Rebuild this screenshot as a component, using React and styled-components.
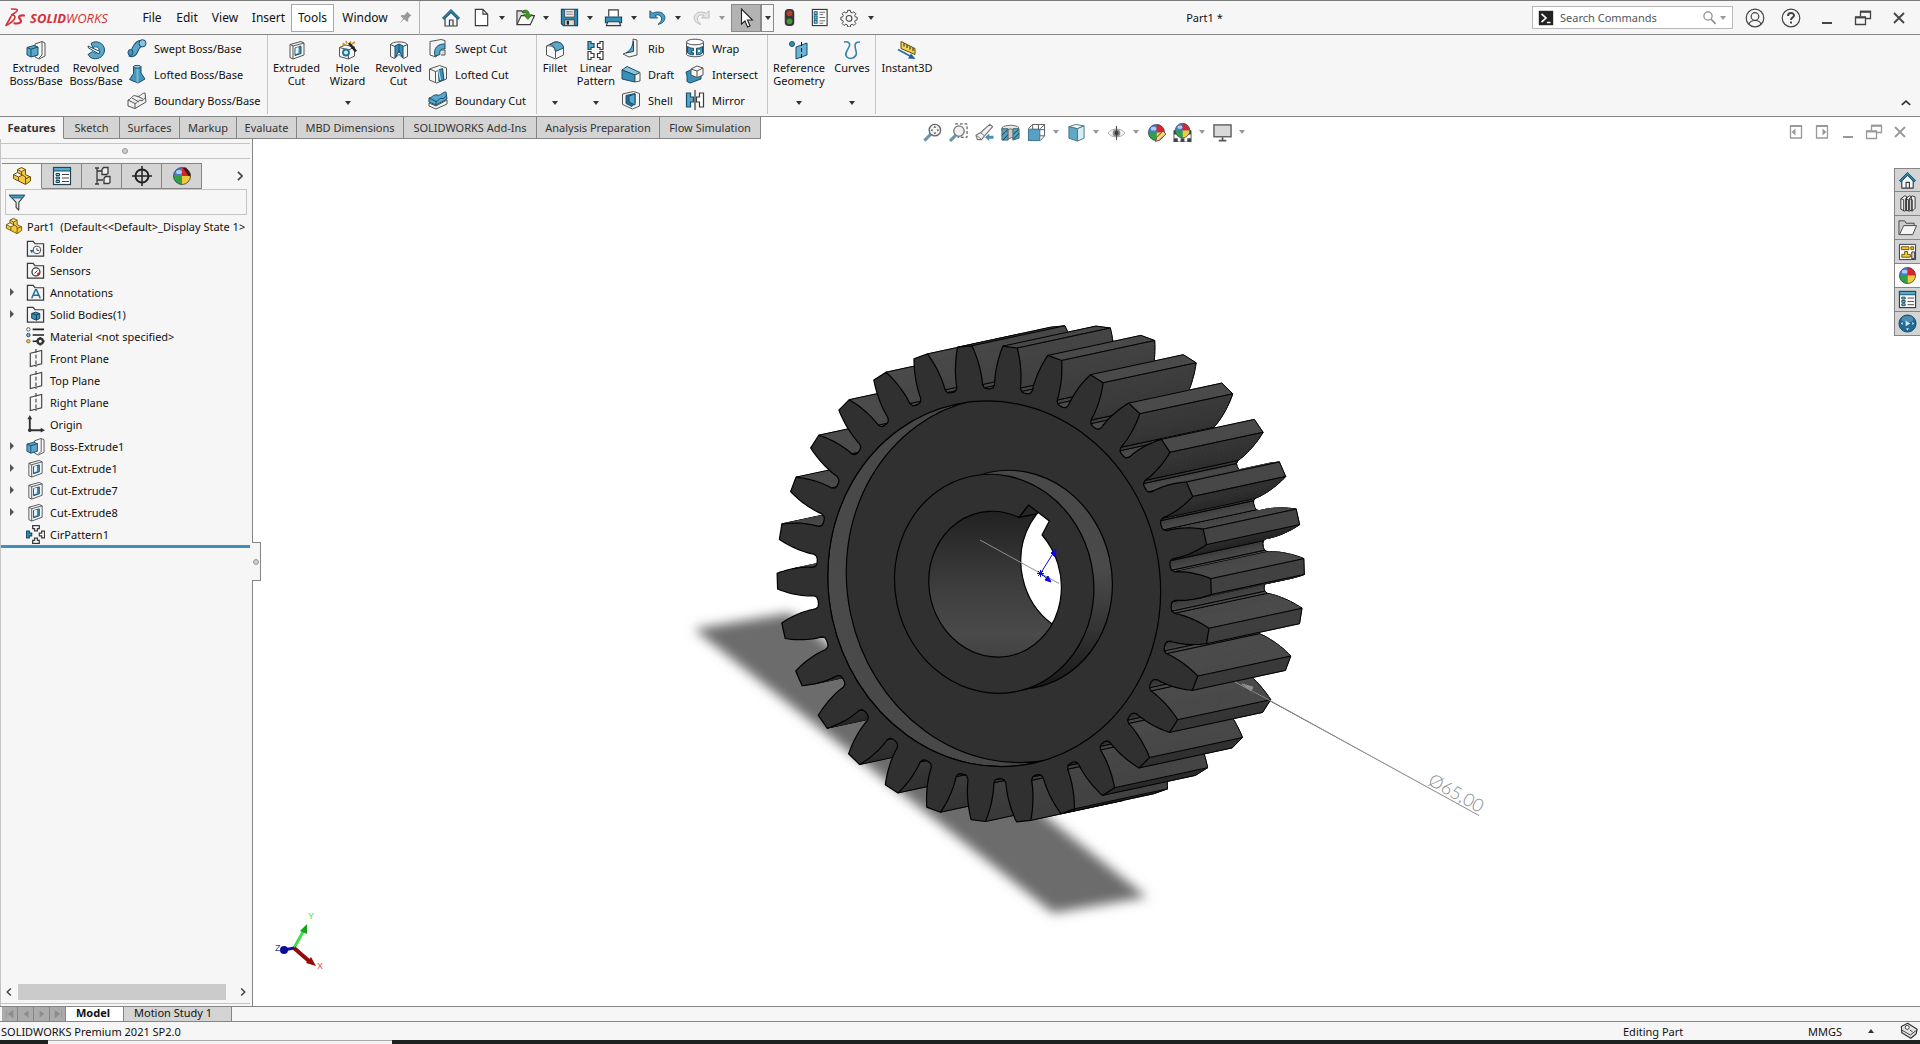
import React from 'react';
import styled, { createGlobalStyle } from 'styled-components';

const GlobalStyle = createGlobalStyle`
  * {
    box-sizing: border-box;
  }
  body {
    margin: 0;
    background: #f6f6f6;
    color: #111;
    font-family: "Noto Sans", "Open Sans", sans-serif;
    font-size: 11px;
    line-height: 13px;
  }
  button, input {
    font: inherit;
    color: inherit;
  }
`;

/* ---------- icons ---------- */

const ink = '#3a3a3a';
const blue = '#5ba6c9';
const deep = '#1f6f98';

const Ball = () => (
  <g>
    <circle cx="10" cy="10" r="8.500" fill="#3f7fd6" />
    <path d="M10 10V1.500a8.500 8.500 0 0 1 8.500 8.500z" fill="#d8262c" />
    <path d="M10 10h8.500a8.500 8.500 0 0 1-8.500 8.500z" fill="#f2cb3d" />
    <path d="M10 10v8.500a8.500 8.500 0 0 1-8.500-8.500z" fill="#2fa043" />
    <ellipse cx="7" cy="6" rx="3" ry="2" fill="#fff" opacity=".6" />
    <circle cx="10" cy="10" r="8.500" fill="none" stroke="#444" strokeWidth=".8" />
  </g>
);

const FolderShape = () => (
  <path d="M1.500 18v-15.500h6l2 2.500h9v13z" fill="#f4f4f4" stroke={ink} strokeWidth="1.300" />
);

const ICONS = {
  home: (
    <g strokeLinejoin="round">
      <path d="M4 10v8h12v-8l-6-6z" fill="#f4f8fa" stroke={ink} strokeWidth="1.200" />
      <path d="M8.500 18v-6h3.500v6" fill="none" stroke={ink} strokeWidth="1.200" />
      <path d="M1.500 10L10 1.500l8.500 8.500-1.500 1.300-7-6.800-7 6.800z" fill="#2b86b0" stroke="#174e69" strokeWidth="1" />
    </g>
  ),
  file: <path d="M3.500 1.500h8l5 5v12h-13z M11.500 1.500v5h5" fill="#fff" stroke={ink} strokeWidth="1.200" />,
  open: (
    <g>
      <path d="M1 17V3h5l1.500 2H13v3" fill="#ddd" stroke={ink} strokeWidth="1.200" />
      <path d="M1 17.500L5.500 8H19.500L15 17.500z" fill="#fafafa" stroke={ink} strokeWidth="1.200" />
      <path d="M7 3c4-2 7 0 7 4h3l-4.500 5L8 7h3c0-2-1.500-3-4-2.500z" fill="#3f9a22" stroke="#22640f" strokeWidth=".7" />
    </g>
  ),
  save: (
    <g>
      <path d="M1.500 1.500h17v17h-15l-2-2z" fill="#2f86ad" stroke="#174a63" strokeWidth="1.200" />
      <rect x="5" y="1.500" width="10" height="8" fill="#f0f0f0" stroke="#444" strokeWidth=".8" />
      <path d="M6.500 4h7M6.500 6.500h7" stroke="#777" />
      <rect x="5" y="12.500" width="10" height="6" fill="#ddd" stroke="#333" strokeWidth=".8" />
      <rect x="7" y="13.500" width="2.500" height="4" fill="#222" />
    </g>
  ),
  print: (
    <g>
      <path d="M5 9V2h10v7" fill="#fff" stroke={ink} strokeWidth="1.200" />
      <path d="M1.500 9.500h17v6h-17z" fill="#3391bb" stroke="#174a63" strokeWidth="1.200" />
      <path d="M4 14.500h12l1.500 4h-15z" fill="#eee" stroke={ink} strokeWidth="1.200" />
    </g>
  ),
  undo: <path d="M2 3v7.500h8L7.300 8c4-2 7 .5 7 3.500 0 2-1.300 4-3.800 5.800 5-1 7.500-4 7.300-7.300C17.500 5 11 2.500 5 5.500z" fill="#4b9cc4" stroke="#1a5877" strokeWidth="1" />,
  redo: <path d="M18 3v7.500h-8l2.700-2.500c-4-2-7 .5-7 3.500 0 2 1.300 4 3.800 5.800-5-1-7.500-4-7.300-7.300C2.500 5 9 2.500 15 5.500z" fill="#e4e4e4" stroke="#bcbcbc" strokeWidth="1" />,
  pointer: <path d="M5.500 1v15l3.500-3 2.500 6 2.500-1-2.500-6h5z" fill="#fff" stroke="#222" strokeWidth="1.100" />,
  traffic: (
    <g>
      <rect x="5" y="1" width="10" height="18" rx="4" fill="#3b3434" />
      <circle cx="10" cy="5.500" r="3" fill="#c33a2c" />
      <circle cx="10" cy="14" r="3" fill="#3ea02f" />
    </g>
  ),
  options: (
    <g>
      <rect x="2.500" y="1.500" width="15.500" height="17" fill="#fff" stroke={ink} strokeWidth="1.200" />
      <path d="M4.500 4h3v3h-3zM4.500 8.500h3v3h-3zM4.500 13h3v3h-3z" fill="#8fc4dd" stroke={deep} strokeWidth="1.200" />
      <path d="M10 4.500h6M10 7h4M10 10h6M10 13.500h6M10 16h4" stroke="#666" />
    </g>
  ),
  gear: (
    <g fill="none" stroke="#444">
      <path d="M8.500 1.500h3l.4 2.200 1.700.7 1.900-1.300 2.100 2.100-1.300 1.900.7 1.700 2 .4v3l-2 .4-.7 1.700 1.300 1.900-2.100 2.100-1.900-1.300-1.700.7-.4 2.200h-3l-.4-2.200-1.700-.7-1.900 1.300-2.100-2.100 1.300-1.900-.7-1.700-2-.4v-3l2-.4.7-1.700-1.300-1.900 2.100-2.100 1.900 1.300 1.700-.7z" strokeWidth="1.100" />
      <circle cx="10" cy="10.500" r="3.200" strokeWidth="1.200" />
    </g>
  ),
  pin: <path d="M12 2l6 5.500-1.500.6-3 3.400.2 3.500-1.500.8-4-3.500L2 18l5-6.800-3.500-3 1-1.500 3.700.4 3.300-3.300z" fill="#9a9a9a" />,
  user: (
    <g fill="none" stroke="#444" strokeWidth="1.200">
      <circle cx="10" cy="10" r="8.800" />
      <circle cx="10" cy="8.500" r="3.800" />
      <path d="M4 16c1-3 3-3.500 6-3.500s5 .5 6 3.500" />
    </g>
  ),
  help: (
    <g fill="none" stroke="#444">
      <circle cx="10" cy="10" r="8.800" strokeWidth="1.200" />
      <path d="M7 8c0-4 6-4 6-.5 0 2-3 2.200-3 4.500" strokeWidth="2" />
      <path d="M10 13.500v2" strokeWidth="2" />
    </g>
  ),
  minimize: <path d="M5 15h10" stroke="currentColor" strokeWidth="2" />,
  restore: (
    <g fill="none" stroke="currentColor" strokeWidth="1.300">
      <path d="M7.500 8.500v-5h10v7h-5" />
      <path d="M7 3.800h11M2 9.200h11" strokeWidth="2" />
      <path d="M2.500 9.500h10v7h-10z" />
    </g>
  ),
  close: <path d="M5 5l10 10M15 5L5 15" stroke="currentColor" strokeWidth="1.800" />,
  paneLeft: (
    <g>
      <path d="M4.500 4h11v12h-11z" fill="none" stroke="#999" strokeWidth="1.300" />
      <path d="M4 4h12" stroke="#999" strokeWidth="2" />
      <path d="M9.500 6.500v7L5.500 10z" fill="#999" />
    </g>
  ),
  paneRight: (
    <g>
      <path d="M4.500 4h11v12h-11z" fill="none" stroke="#999" strokeWidth="1.300" />
      <path d="M4 4h12" stroke="#999" strokeWidth="2" />
      <path d="M10.500 6.500v7l4-3.500z" fill="#999" />
    </g>
  ),
  extrude: (
    <g strokeLinejoin="round" strokeWidth="1">
      <path d="M9 4l7-2.500 3 1.500v13l-6 3-4-2z" fill="#fafafa" stroke="#555" />
      <path d="M16 2v13l-3 3" fill="none" stroke="#555" />
      <path d="M1 7.500l7-2 4 1.500v8l-7 2-4-2z" fill={blue} stroke="#174f6c" />
      <path d="M1 7.500l4 1.700v7.800M5 9.200L12 7" fill="none" stroke="#174f6c" />
    </g>
  ),
  revolve: (
    <g strokeLinejoin="round" strokeWidth="1">
      <path d="M5 3.500C10-.5 18.500 3 18.500 10s-8 11-14 7.500L2 14.500l4.500-3c3 3 6.500 1 6.500-2S8 6 7 8z" fill={blue} stroke="#174f6c" />
      <path d="M2 6l12 5.500-1 2.500L2.500 8z" fill="#f2f7fa" stroke="#174f6c" />
    </g>
  ),
  sweep: (
    <g strokeLinejoin="round">
      <path d="M3 15c6 3 4-10 12-9.500" fill="none" stroke="#174f6c" strokeWidth="7.500" />
      <path d="M3 15c6 3 4-10 12-9.500" fill="none" stroke={blue} strokeWidth="5.500" />
      <ellipse cx="15.500" cy="5.300" rx="3.500" ry="3.600" fill="#8cc4de" stroke="#174f6c" />
      <ellipse cx="3.500" cy="14.500" rx="2.500" ry="3" fill="#4794b8" stroke="#174f6c" />
    </g>
  ),
  loft: (
    <g strokeLinejoin="round">
      <path d="M6.500 2.500h7.500V9l4 6-7 4-8.500-3.500 4-6z" fill="#4795ba" stroke="#174f6c" />
      <path d="M10.500 4v14.500" stroke="#78b8d4" strokeWidth="2" />
      <ellipse cx="10.200" cy="2.800" rx="3.800" ry="1.400" fill="#9fd0e4" stroke="#174f6c" />
    </g>
  ),
  boundary: (
    <g fill="#f1f1f1" stroke="#555" strokeLinejoin="round">
      <path d="M1 10c3 0 4-6 8-4s5-3 9-3l1 9-11 6.500L1 16z" />
      <path d="M1 10l7 3.500c3-.5 3-4 6-3s3-3 5-3.500M8 13.500v5M5 8l7 4M10 6l6 3" fill="none" />
    </g>
  ),
  boundaryCut: (
    <g stroke="#174f6c" strokeLinejoin="round">
      <path d="M1 13l7 3 11-6v4L8 19l-7-3z" fill="#f4f4f4" stroke="#555" />
      <path d="M1 8c3 0 4-4 8-3s5-3 9-3l1 7-11 6-7-3z" fill={blue} />
      <path d="M1 8l7 3.500c3-.5 3-4 6-3s3-3 5-3.500M8 11.500v4" fill="none" />
    </g>
  ),
  cut: (
    <g strokeLinejoin="round">
      <path d="M3 4.500l11-3 3 1.500v12l-11 4-3-1.500z" fill="#f7f7f7" stroke="#555" />
      <path d="M3 4.500l3 1.500v13M6 6l11-3" fill="none" stroke="#555" />
      <path d="M8 8l6-1.800v7.300l-6 2z" fill="#3a8fb6" stroke="#174f6c" />
      <path d="M8.500 8v6l3-1V7z" fill="#f2f7fa" />
    </g>
  ),
  hole: (
    <g strokeLinejoin="round">
      <path d="M1.500 7.500l6-2.500 9 2v9l-6 3-9-2.500z" fill="#f5f5f5" stroke="#555" />
      <path d="M1.500 7.500l9 2.500v9M10.500 10l6-3" fill="none" stroke="#555" />
      <circle cx="8" cy="12.500" r="3" fill="#cfe6f0" stroke={deep} strokeWidth="1.800" />
      <path d="M11 3l7 8.500" stroke="#222" strokeWidth="2.600" />
      <path d="M5 3l2 2M8 1l1 2.500M13 1.500L12 3M4 5.500l3-.5M14 4l3-2" stroke="#dd8a12" strokeWidth="1.600" />
    </g>
  ),
  revolveCut: (
    <g strokeLinejoin="round">
      <path d="M1.500 4.500c2-3.500 15-3.500 17 0v12l-4 2-4.500-4-4.500 4-4-2z" fill="#f5f5f5" stroke="#555" />
      <path d="M6 6l4-2 4 2v12l-4-7-4 7z" fill="#3a8fb6" stroke="#174f6c" />
      <path d="M10 4v9M1.500 4.500L6 6.500M18.500 4.500L14 6.500" stroke="#174f6c" />
    </g>
  ),
  sweepCut: (
    <g strokeLinejoin="round">
      <path d="M2 3.500l11-2 4 1v3L8 19l-6-2z" fill="#f5f5f5" stroke="#555" />
      <path d="M7 18c-2-8 3-12.500 10-12v5c-4-.5-6 1.500-5 5.500z" fill={blue} stroke="#174f6c" />
      <path d="M13 12h4v5h-4" fill="#ddd" stroke="#555" />
    </g>
  ),
  loftCut: (
    <g strokeLinejoin="round">
      <path d="M1.500 5l10-3.500L18.500 4v11l-10 4-7-3z" fill="#f5f5f5" stroke="#555" />
      <path d="M1.500 5l6 2.500v11M7.500 7.500l3-1" fill="none" stroke="#555" />
      <path d="M10.500 6l4-1.500 1.500 11-5 2z" fill="#3a8fb6" stroke="#174f6c" />
      <path d="M10.500 6l2 10" stroke="#cfe6f0" />
    </g>
  ),
  fillet: (
    <g strokeLinejoin="round">
      <path d="M1.500 6l8-4c5-.5 8.500 2 9 6v7l-8 4-9-4z" fill="#f7f7f7" stroke="#555" />
      <path d="M5 4.500l5-2.500c5-.5 8 2 8.500 6l-8 3.500C10 8 8 5 5 4.500z" fill={blue} stroke="#174f6c" />
      <path d="M1.500 6c5-1 9 1.500 9 5.500v7" fill="none" stroke="#555" />
    </g>
  ),
  pattern: (
    <g fill="#fff" stroke={ink} strokeWidth="1.200">
      <path d="M2 1.500h3v2h3v4H5v2H2z" fill={blue} stroke="#174f6c" />
      <path d="M17 1.500h-3v2h-2.500v4H14v2h3zM2 11.500h3v2h3v4H5v2H2zM17 11.500h-3v2h-2.500v4H14v2h3z" />
    </g>
  ),
  rib: (
    <g strokeLinejoin="round">
      <path d="M12 1l4 1v15l-8 2-6-3 10-4z" fill="#f5f5f5" stroke="#555" />
      <path d="M12.500 3v10.500L5 15c5-3 6-6 7.500-12z" fill={blue} stroke="#174f6c" />
    </g>
  ),
  draft: (
    <g strokeLinejoin="round" stroke="#174f6c">
      <path d="M1 6l5-3.500L19 8.500 14 11z" fill="#8cc4de" />
      <path d="M1 6l13 5v7L1 15z" fill="#3a8fb6" />
      <path d="M14 11l5-2.500V17l-5 1z" fill="#f7f7f7" stroke="#555" />
    </g>
  ),
  shell: (
    <g strokeLinejoin="round">
      <path d="M1.500 4l11-2.500 6 2V16l-7 3-10-4.500z" fill="#f5f5f5" stroke="#555" />
      <path d="M5 5.500l9-2v9.500l-3 3.500-6-3z" fill={deep} stroke="#174f6c" />
      <path d="M8 6v6l6 3V4z" fill={blue} stroke="#174f6c" />
    </g>
  ),
  wrap: (
    <g>
      <path d="M1.500 4.500v12c2 3 15 3 17 0v-12" fill="#f5f5f5" stroke="#555" />
      <ellipse cx="10" cy="4" rx="8.500" ry="2.800" fill="#fff" stroke="#555" />
      <path d="M2.500 8.500c2 1.500 4 1.800 6 1.800v2.500H6.500v2H8.500v2c-3 0-5-1-6-2zM17.500 8.500c-2 1.500-4 1.800-6 1.800v6.500c3 0 5-1 6-2z" fill="#3a8fb6" stroke="#174f6c" />
      <circle cx="14" cy="13" r="1.200" fill="#fff" />
    </g>
  ),
  intersect: (
    <g strokeLinejoin="round">
      <path d="M1 8l5-2 5 6 5-1v4l-11 4-3-1.500L2 12z" fill="#3a8fb6" stroke="#174f6c" />
      <path d="M6 5l6-3 6 2v7l-6 2.500L6 11z" fill="#f7f7f7" stroke="#555" />
      <path d="M6 5l6 2v6.500M12 7l6-3" fill="none" stroke="#555" />
    </g>
  ),
  mirror: (
    <g>
      <path d="M1.500 3h4v4h3v5h-3v5h-4z" fill={blue} stroke="#174f6c" strokeWidth="1.200" />
      <path d="M18.500 3h-4v4h-3v5h3v5h4z" fill="#fff" stroke={ink} strokeWidth="1.200" />
      <path d="M10 0v20" stroke="#111" />
    </g>
  ),
  refGeometry: (
    <g>
      <circle cx="3" cy="4" r="2.500" fill="#3a8fb6" stroke="#174f6c" />
      <path d="M7 7l11-4v12L7 19z" fill="#6db4d3" stroke="#174f6c" />
      <path d="M12.500 2v18" stroke="#111" strokeDasharray="4 2" />
    </g>
  ),
  curves: <path d="M2 2c4-1 7 1 5 5s-5 7-2 10 11 1 9-6-1-9 4-9" fill="none" stroke="#3585ab" strokeWidth="1.600" />,
  instant: (
    <g>
      <path d="M4 1.500l14 7v6l-14-6z" fill="#f3d34a" stroke="#5d4c0c" />
      <path d="M7 3.500v3M10 5v3M13 6.500v3M16 8v3" stroke="#222" />
      <path d="M1 9.500l12 6.500" stroke="#2b6ea6" strokeWidth="1.800" />
      <path d="M18.500 19l-7.500-.5 3-5z" fill="#225f96" />
    </g>
  ),
  zoomFit: (
    <g>
      <path d="M1.500 18.500l6.500-6.500" stroke="#6a94aa" strokeWidth="3.200" />
      <circle cx="12.500" cy="7.500" r="6" fill="#f4f4f4" stroke="#666" strokeWidth="1.400" />
      <path d="M12.500 3l1.500 2h-3zM12.500 12l1.500-2h-3zM8 7.500L10 6v3zM17 7.500L15 6v3z" fill="#555" />
    </g>
  ),
  zoomArea: (
    <g>
      <path d="M6.500 1h12.500v14H9" fill="none" stroke="#333" strokeDasharray="3 2" />
      <path d="M1 19l6-6" stroke="#6a94aa" strokeWidth="3.200" />
      <circle cx="10.500" cy="8.500" r="5.500" fill="#f0f0f0" stroke="#777" strokeWidth="1.400" />
    </g>
  ),
  prevView: (
    <g strokeLinejoin="round">
      <path d="M15.500 1.500l3 2.500-8.500 9.500-3 4H2.500L1 13l5-3z" fill="#f2f2f2" stroke="#777" strokeWidth="1.200" />
      <path d="M5.500 10l4.500 3.500M1.500 13l5 4" stroke="#777" />
      <path d="M10.500 15l4.500-4v2.500h4.500v3H15V19z" fill="#4d8fb3" />
    </g>
  ),
  section: (
    <g>
      <path d="M1 5c3-3.500 15-3.500 18 0l-4 3h-3c-2-1.500-3-1.500-4 0H1z" fill="#e8e8e8" stroke="#666" />
      <path d="M1 6h6.500v12H1zM12.500 6H19v10l-6.500 2z" fill="#53a3c5" stroke="#466" />
      <path d="M1 13l6-6M2 18l5.500-6M13 12l5-5M13 17l6-6" stroke="#234" />
      <path d="M7.500 7c2-1 3-1 5 0v8l-5 2z" fill="#ccc" stroke="#666" />
    </g>
  ),
  viewCube: (
    <g fill="none" stroke="#555">
      <path d="M6 1.500h12.500v12L14 18.500M1.500 6L6 1.500v12H18.500M14 6l4.500-4.500M12 1.500v12M6 7h12.500" />
      <path d="M1.500 6.500h12v12h-12z" fill="#58a0c2" stroke="#3b6f88" />
    </g>
  ),
  display: (
    <g strokeLinejoin="round" stroke="#4d7385">
      <path d="M2 4l7-2.500 9 1.500-7 3z" fill="#eef7fb" />
      <path d="M2 4l9 2v13l-9-3z" fill="#5faac9" />
      <path d="M11 6l7-3v13l-7 3z" fill="#d7ecf5" />
    </g>
  ),
  eye: (
    <g>
      <path d="M1 10.500C5 5 15 5 19 10.500 15 16 5 16 1 10.500z" fill="#f4f4f4" stroke="#aaa" />
      <circle cx="10" cy="10.500" r="4" fill="#888" />
      <circle cx="10" cy="10.500" r="2" fill="#333" />
      <path d="M10 3v15" stroke="#444" />
    </g>
  ),
  appearance: (
    <g>
      <Ball />
      <path d="M9 19.500l1-4 7-7 3 3-7 6.500z" fill="#f3d98b" stroke="#8a3b2c" />
    </g>
  ),
  scene: (
    <g>
      <path d="M1 8h18v12H1z" fill="#fff" stroke="#555" />
      <path d="M1 8h4v4H1zM15 8h4v4h-4zM1 16h4v4H1zM8 16h4v4H8zM15 16h4v4h-4z" fill="#444" />
      <g transform="translate(1 -1) scale(.9)"><Ball /></g>
    </g>
  ),
  monitor: (
    <g>
      <rect x="1" y="2" width="18" height="12.500" fill="#d9d9d9" stroke="#555" strokeWidth="1.400" />
      <path d="M10 15v3M6 18.500h8" stroke="#555" strokeWidth="1.800" />
    </g>
  ),
  part: (
    <path
      d="M1.500 8.500l4-2v-3l4-2 4 2v5l5 2.500v4l-5 3.500-12-6z M1.500 8.500l5 2.500 4-2-5-2.500 M6.500 11v4 M10.500 9l3 2v7 M13.500 13l5-2.500 M5.500 3.500l4 2 4-2 M9.500 5.500v4"
      fill="#f5c93f" stroke="#6b5210" strokeWidth="1" strokeLinejoin="round"
    />
  ),
  props: (
    <g>
      <rect x="1.500" y="1.500" width="17" height="17" fill="#fff" stroke="#27414e" strokeWidth="1.200" />
      <path d="M1.500 1.500h17V5h-17z" fill="#58a9c9" stroke="#174a63" />
      <path d="M4 7.500h3.500v2H4zM4 11h3.500v2H4zM4 14.500h3.500v2H4z" fill="#8fc4dd" stroke="#174a63" />
      <path d="M10 8.500h7M10 12h7M10 15.500h7" stroke="#444" />
    </g>
  ),
  config: (
    <g stroke={ink} strokeWidth="1.300">
      <path d="M5 2v16M5 5h5M5 14h6M3 2h4M3 18h4" fill="none" />
      <path d="M10 3.500l1.500-2H16v6l-1.500 1H10zM12 12.500l1.500-2H18v6l-1.500 1H12z" fill="#eee" />
    </g>
  ),
  target: (
    <g fill="none" stroke="#222">
      <circle cx="10" cy="10" r="6.500" strokeWidth="2" />
      <path d="M10 0v20M0 10h20" strokeWidth="1.500" />
    </g>
  ),
  ball: <Ball />,
  ballDark: (
    <g>
      <Ball />
      <path d="M11 2l3-.500 4.500 7-1.500 2z" fill="#3a1512" />
    </g>
  ),
  filter: (
    <g>
      <path d="M1.500 2.500h17L12 10.500V19l-3-3v-5.500z" fill="#e7e7e7" stroke={ink} strokeWidth="1.200" strokeLinejoin="round" />
      <path d="M1.500 2.500h17L16 5.500H4z" fill="#3f9fc6" stroke="#1d5c78" />
    </g>
  ),
  folderHistory: (
    <g>
      <FolderShape />
      <circle cx="11.500" cy="11.500" r="4" fill="#fff" stroke="#444" />
      <path d="M11.500 9.500v2.500h2.500" fill="none" stroke="#444" />
      <path d="M4 11.500h4.500L6 15z" fill={deep} />
    </g>
  ),
  folderSensor: (
    <g>
      <FolderShape />
      <circle cx="10.500" cy="11.500" r="4.200" fill="#fff" stroke="#333" strokeWidth="1.300" />
      <path d="M9 13l3-3" stroke="#222" />
      <path d="M12 14.500l2-2" stroke="#c22" strokeWidth="2" />
    </g>
  ),
  folderNote: (
    <g>
      <FolderShape />
      <path d="M6 16l4-9h1l4 9M7.500 13h6" fill="none" stroke={deep} strokeWidth="1.600" />
    </g>
  ),
  folderBody: (
    <g>
      <FolderShape />
      <path d="M6 9l4-1.500L14.500 9v5L11 16l-5-2z" fill="#3a8fb6" stroke="#0e3f58" />
      <path d="M6 9l5 1.500L14.500 9M11 10.500V16" fill="none" stroke="#0e3f58" />
    </g>
  ),
  material: (
    <g>
      <path d="M7 2.500h12M7 8.500h12M7 15h6" stroke="#222" strokeWidth="1.600" />
      <circle cx="2.500" cy="2.500" r="1.800" fill="#fff" stroke="#555" />
      <circle cx="2.500" cy="8.500" r="1.800" fill="#7fbbd6" stroke="#245" />
      <circle cx="2.500" cy="15" r="1.800" fill="#f2cf3d" stroke="#863" />
      <circle cx="15" cy="15" r="2.800" fill="#fff" stroke="#333" strokeWidth="2.400" />
      <path d="M15 10.500v2M15 17.500v2M10.500 15h2M17.500 15h2" stroke="#333" strokeWidth="2" />
    </g>
  ),
  plane: (
    <g fill="none" stroke="#444" strokeWidth="1.200">
      <path d="M4.500 4.500l12-3v14l-12 3z" />
      <path d="M10.500 0v19" strokeDasharray="4 2" />
    </g>
  ),
  origin: (
    <g stroke="#333" fill="#333">
      <path d="M4 3v13h12" fill="none" strokeWidth="2" />
      <path d="M4 0l2.500 4.500h-5zM20 16l-4.500 2.500v-5z" stroke="none" />
      <circle cx="4" cy="16" r="1.500" />
    </g>
  ),
  circular: (
    <g fill="#fff" stroke={ink} strokeWidth="1.300">
      <path d="M7 .700h7v3h-2v2.500H9V3.700H7zM7 19.300h7v-3h-2v-2.500H9v2.500H7zM19.500 6.500v7h-3v-2h-2.500v-3h2.500v-2z" />
      <path d="M.500 6.500v7h3v-2H6v-3H3.500v-2z" fill="#3a8fb6" stroke="#174f6c" />
    </g>
  ),
  library: (
    <g fill="#eee" stroke="#333" strokeLinejoin="round">
      <path d="M3 5l4-3 2 .5V17l-2 1-4-2zM8 5l4-3 2 .5V17l-2 1-4-1zM12 5l3-3 3 1v12l-3 3-3-1z" />
      <path d="M3 5l3 1v12M8 5l3 1v12M12 5l3 1v12" fill="none" />
    </g>
  ),
  folderOpen: (
    <g stroke="#444" strokeLinejoin="round">
      <path d="M1 17.500V3h6l1.500 2.500H17V8" fill="#ccc" />
      <path d="M1.500 17.500L6 8h13.500l-4 9.500z" fill="#f4f4f4" />
    </g>
  ),
  palette: (
    <g stroke="#333">
      <path d="M1.500 2.500h17v16h-17z" fill="#fff" />
      <path d="M3.500 5h8v3h-8zM13.500 5h3v3h-3zM7 10h3v3h3v3H4v-3h3z" fill="#f2cb2b" stroke="#6b5210" />
      <path d="M14.500 10.500h3v7h-3z" fill="#ddd" />
    </g>
  ),
  forum: (
    <g>
      <circle cx="10" cy="10" r="9" fill="#226a93" stroke="#16435d" />
      <ellipse cx="10" cy="5.500" rx="6" ry="3.500" fill="#5f9dbd" opacity=".7" />
      <path d="M8 7l5 3-5 3zM3 10l2-1.500v3zM17 10l-2-1.500v3zM10 17.500L8.500 15h3z" fill="#cfe8f5" />
    </g>
  ),
  prompt: (
    <g>
      <rect x="2" y="2" width="16" height="16" fill="#222" />
      <path d="M5 5.500l5 4.500-5 4.500M11 15h4" fill="none" stroke="#fff" strokeWidth="1.800" />
    </g>
  ),
  search: (
    <g fill="none" stroke="#888" strokeWidth="1.600">
      <circle cx="8" cy="8" r="5.500" />
      <path d="M12 12l6 6.500" strokeWidth="2" />
    </g>
  ),
  tag: (
    <g strokeLinejoin="round" stroke="#333">
      <path d="M1.500 5l7-3.500L19 8l-1 5-6 5L2 12z" fill="#e4e4e4" strokeWidth="1.300" />
      <path d="M2 9l9.500 5.500L18.500 9" fill="none" />
      <circle cx="8" cy="6" r="2.200" fill="#fff" />
      <path d="M11 9l3 2" />
    </g>
  ),
  chevronRight: <path d="M7 4l6 6-6 6" fill="none" stroke="#444" strokeWidth="2.400" />,
  chevronLeft: <path d="M13 4l-6 6 6 6" fill="none" stroke="#444" strokeWidth="2.400" />,
  chevronUp: <path d="M3 13l7-6 7 6" fill="none" stroke="#333" strokeWidth="2.800" />,
  navFirst: <path d="M4 4v12M15 4v12l-8-6z" fill="#8c8c8c" stroke="#8c8c8c" />,
  navPrev: <path d="M14 4v12l-8-6z" fill="#8c8c8c" />,
  navNext: <path d="M6 4v12l8-6z" fill="#8c8c8c" />,
  navLast: <path d="M16 4v12M5 4v12l8-6z" fill="#8c8c8c" stroke="#8c8c8c" />,
};

const IconSvg = styled.svg`
  display: block;
  flex: none;
  width: ${({ $size }) => $size}px;
  height: ${({ $size }) => $size}px;
`;

const Icon = ({ name, size = 20 }) => (
  <IconSvg $size={size} viewBox="0 0 20 20" fill="none" aria-hidden="true">
    {ICONS[name]}
  </IconSvg>
);

/* ---------- title bar ---------- */

const Window = styled.div`
  display: flex;
  flex-direction: column;
  height: 100vh;
  overflow: hidden;
  border-top: 1px solid #7a7a7a;
`;

const TitleBar = styled.header`
  display: flex;
  align-items: center;
  height: 34px;
  flex: none;
  padding-right: 3px;
  border-bottom: 1px solid #858585;
  white-space: nowrap;
`;

const Brand = styled.div`
  display: flex;
  align-items: center;
  gap: 4px;
  width: 134px;
  padding-left: 4px;
  color: #d4303a;
  font-family: "Open Sans", sans-serif;
  font-size: 13px;
  line-height: 18px;
  font-style: italic;

  svg {
    width: 22px;
    height: 22px;
  }
`;

const MenuButton = styled.button`
  width: ${({ $width }) => $width}px;
  height: 28px;
  padding: 0;
  border: 1px solid ${({ $active }) => ($active ? '#a8a8a8' : 'transparent')};
  background: ${({ $active }) => ($active ? '#fff' : 'none')};
  font-size: 12px;
`;

const ToolButton = styled.button`
  display: flex;
  align-items: center;
  justify-content: center;
  flex: none;
  width: ${({ $width }) => $width}px;
  height: ${({ $height }) => $height || 28}px;
  padding: 0;
  border: ${({ $boxed }) => ($boxed ? '1px solid #8a8a8a' : '0')};
  background: ${({ $pressed }) => ($pressed ? '#b3b3b3' : 'none')};
  color: ${({ $muted }) => ($muted ? '#999' : '#444')};
`;

const Caret = styled.span`
  width: 0;
  height: 0;
  border: 3px solid transparent;
  border-bottom-width: 0;
  border-top: 4px solid ${({ $muted }) => ($muted ? '#999' : '#333')};
`;

const Divider = styled.div`
  width: 1px;
  height: 34px;
  margin: 0 16px 0 4px;
  background: #b5b5b5;
`;

const QuickTools = styled.div`
  display: flex;
  gap: 2px;
  margin-left: 3px;
`;

const Split = styled.div`
  display: flex;
`;

const DocTitle = styled.div`
  flex: 1;
  text-align: center;
`;

const SearchBox = styled.label`
  display: flex;
  align-items: center;
  width: 201px;
  height: 23px;
  margin-right: 4px;
  padding: 0 3px 0 4px;
  border: 1px solid #b8b8b8;
  background: #fff;

  input {
    flex: 1;
    min-width: 0;
    margin-left: 5px;
    padding: 0;
    border: 0;
    outline: 0;
    background: none;
  }
  input::placeholder {
    color: #555;
    opacity: 1;
  }
`;

const MENUS = [
  { label: 'File', width: 36 },
  { label: 'Edit', width: 34 },
  { label: 'View', width: 42 },
  { label: 'Insert', width: 45 },
  { label: 'Tools', width: 43, active: true },
  { label: 'Window', width: 62 },
];

const SPLITS = ['file', 'open', 'save', 'print', 'undo', 'redo'];

const TopBar = () => (
  <TitleBar>
    <Brand>
      <svg viewBox="0 0 22 22" fill="none" stroke="#d4303a" strokeLinecap="round" strokeLinejoin="round">
        <path d="M7.500 2l4.500.300c2 .2 1.500 1.700-.5 3L7.500 8c6.500 0 3.500 6-5.500 10.500L7 9.500" strokeWidth="1.600" />
        <path d="M20 8.500c-3-.5-6 .5-4.500 2.800s2.500 3 .5 4.400c-1.500 1.100-3.500.9-5.500.6" strokeWidth="2.200" />
      </svg>
      <span><b>SOLID</b>WORKS</span>
    </Brand>
    {MENUS.map((menu) => (
      <MenuButton key={menu.label} $width={menu.width} $active={menu.active}>{menu.label}</MenuButton>
    ))}
    <ToolButton $width={19} aria-label="Pin menu"><Icon name="pin" size={15} /></ToolButton>
    <Divider />
    <ToolButton $width={30} aria-label="Home"><Icon name="home" /></ToolButton>
    <QuickTools>
      {SPLITS.map((name) => (
        <Split key={name}>
          <ToolButton $width={24} aria-label={name}><Icon name={name} size={19} /></ToolButton>
          <ToolButton $width={18} aria-label={`${name} options`}><Caret $muted={name === 'redo'} /></ToolButton>
        </Split>
      ))}
    </QuickTools>
    <ToolButton $width={30} $boxed $pressed aria-label="Select"><Icon name="pointer" /></ToolButton>
    <ToolButton $width={13} $boxed aria-label="Select options"><Caret /></ToolButton>
    <ToolButton $width={30} aria-label="Rebuild"><Icon name="traffic" size={19} /></ToolButton>
    <ToolButton $width={30} aria-label="File properties"><Icon name="options" size={19} /></ToolButton>
    <ToolButton $width={30} aria-label="Options"><Icon name="gear" size={18} /></ToolButton>
    <ToolButton $width={13} aria-label="More options"><Caret /></ToolButton>
    <DocTitle>Part1 *</DocTitle>
    <SearchBox>
      <Icon name="prompt" size={18} />
      <input type="text" placeholder="Search Commands" aria-label="Search Commands" />
      <Icon name="search" size={15} />
      <ToolButton $width={12} $height={20} aria-label="Search options"><Caret $muted /></ToolButton>
    </SearchBox>
    {['user', 'help', 'minimize', 'restore', 'close'].map((name) => (
      <ToolButton key={name} $width={36} aria-label={name}><Icon name={name} /></ToolButton>
    ))}
  </TitleBar>
);

/* ---------- ribbon ---------- */

const RibbonBar = styled.div`
  display: flex;
  flex: none;
  height: 82px;
  border-bottom: 1px solid #858585;
`;

const Group = styled.div`
  display: flex;
  width: ${({ $width }) => $width}px;
  height: 79px;
  padding-left: ${({ $pad }) => $pad || 0}px;
  border-right: ${({ $last }) => ($last ? 0 : '1px solid #c4c4c4')};
`;

const BigButton = styled.button`
  display: flex;
  flex-direction: column;
  align-items: center;
  flex: none;
  width: ${({ $width }) => $width}px;
  padding: 5px 0 9px;
  border: 0;
  background: none;
  white-space: pre;

  ${Caret} {
    margin-top: auto;
  }
`;

const BigLabel = styled.span`
  margin-top: 1px;
`;

const SmallColumn = styled.div`
  display: flex;
  flex-direction: column;
  flex: none;
  width: ${({ $width }) => $width || 110}px;
  margin-left: ${({ $gap }) => $gap || 0}px;
`;

const SmallButton = styled.button`
  display: flex;
  align-items: center;
  gap: 7px;
  height: 26px;
  padding: 0;
  border: 0;
  background: none;
  white-space: nowrap;
`;

const Collapse = styled.button`
  align-self: flex-end;
  display: flex;
  margin: 0 8px 7px auto;
  padding: 0;
  border: 0;
  background: none;
`;

const GROUPS = [
  {
    width: 268, pad: 6,
    big: [
      { icon: 'extrude', label: 'Extruded\nBoss/Base', width: 60 },
      { icon: 'revolve', label: 'Revolved\nBoss/Base', width: 60 },
    ],
    columns: [{ gap: 1, width: 130, items: [['sweep', 'Swept Boss/Base'], ['loft', 'Lofted Boss/Base'], ['boundary', 'Boundary Boss/Base']] }],
  },
  {
    width: 269, pad: 3,
    big: [
      { icon: 'cut', label: 'Extruded\nCut', width: 51 },
      { icon: 'hole', label: 'Hole\nWizard', width: 51, menu: true },
      { icon: 'revolveCut', label: 'Revolved\nCut', width: 51 },
    ],
    columns: [{ gap: 4, items: [['sweepCut', 'Swept Cut'], ['loftCut', 'Lofted Cut'], ['boundaryCut', 'Boundary Cut']] }],
  },
  {
    width: 231,
    big: [
      { icon: 'fillet', label: 'Fillet', width: 36, menu: true },
      { icon: 'pattern', label: 'Linear\nPattern', width: 46, menu: true },
    ],
    columns: [
      { gap: 2, width: 64, items: [['rib', 'Rib'], ['draft', 'Draft'], ['shell', 'Shell']] },
      { width: 80, items: [['wrap', 'Wrap'], ['intersect', 'Intersect'], ['mirror', 'Mirror']] },
    ],
  },
  {
    width: 108, pad: 1,
    big: [
      { icon: 'refGeometry', label: 'Reference\nGeometry', width: 60, menu: true },
      { icon: 'curves', label: 'Curves', width: 46, menu: true },
    ],
    columns: [],
  },
  { width: 64, last: true, big: [{ icon: 'instant', label: 'Instant3D', width: 62 }], columns: [] },
];

const Ribbon = () => (
  <RibbonBar>
    {GROUPS.map((group, index) => (
      <Group key={index} $width={group.width} $pad={group.pad} $last={group.last}>
        {group.big.map((item) => (
          <BigButton key={item.label} $width={item.width}>
            <Icon name={item.icon} />
            <BigLabel>{item.label}</BigLabel>
            {item.menu && <Caret />}
          </BigButton>
        ))}
        {group.columns.map((column, i) => (
          <SmallColumn key={i} $gap={column.gap} $width={column.width}>
            {column.items.map(([icon, label]) => (
              <SmallButton key={label}><Icon name={icon} />{label}</SmallButton>
            ))}
          </SmallColumn>
        ))}
      </Group>
    ))}
    <Collapse aria-label="Collapse ribbon"><Icon name="chevronUp" size={12} /></Collapse>
  </RibbonBar>
);

/* ---------- command tabs ---------- */

const CommandTabs = styled.nav`
  position: relative;
  z-index: 1;
  display: flex;
  width: max-content;
  height: 22px;
  margin-bottom: -22px;
`;

const CommandTab = styled.button`
  width: ${({ $width }) => $width}px;
  padding: 0;
  border: 0;
  border-right: 1px solid #858585;
  border-bottom: 1px solid ${({ $active }) => ($active ? '#f6f6f6' : '#858585')};
  background: ${({ $active }) => ($active ? '#f6f6f6' : '#d4d4d4')};
  color: #333;
  font-weight: ${({ $active }) => ($active ? 700 : 400)};
  white-space: nowrap;
`;

const TABS = [
  ['Features', 64], ['Sketch', 56], ['Surfaces', 60], ['Markup', 57], ['Evaluate', 60],
  ['MBD Dimensions', 107], ['SOLIDWORKS Add-Ins', 133], ['Analysis Preparation', 123], ['Flow Simulation', 101],
];

/* ---------- feature manager ---------- */

const Workspace = styled.main`
  display: flex;
  flex: 1;
  min-height: 0;
`;

const Panel = styled.aside`
  position: relative;
  display: flex;
  flex-direction: column;
  flex: none;
  width: 253px;
  padding: 26px 2px 0 0;
  border-right: 1px solid #858585;
  border-left: 1px solid #c4c4c4;
`;

const Grip = styled.div`
  display: flex;
  align-items: center;
  justify-content: center;
  height: 16px;
  padding-right: 2px;
  border-top: 1px solid #c4c4c4;
  border-bottom: 1px solid #c4c4c4;
`;

const Dot = styled.span`
  width: 6px;
  height: 6px;
  border: 1px solid #999;
  border-radius: 50%;
  background: #ccc;
`;

const PanelTabs = styled.div`
  display: flex;
  height: 26px;
  margin-top: 4px;
  padding-left: 1px;
`;

const PanelTab = styled.button`
  display: flex;
  align-items: center;
  justify-content: center;
  width: 40px;
  padding: 0;
  border: 0;
  border-top: 1px solid #858585;
  border-right: 1px solid #858585;
  border-bottom: 1px solid ${({ $active }) => ($active ? '#f6f6f6' : '#858585')};
  background: ${({ $active }) => ($active ? '#f6f6f6' : '#d4d4d4')};
`;

const PanelMore = styled.button`
  display: flex;
  align-items: center;
  margin-left: auto;
  padding: 0 3px;
  border: 0;
  background: none;
`;

const FilterBox = styled.label`
  display: flex;
  align-items: center;
  height: 26px;
  margin: 0 3px 0 4px;
  padding: 0 2px;
  border: 1px solid #c4c4c4;

  input {
    flex: 1;
    min-width: 0;
    border: 0;
    outline: 0;
    background: none;
  }
`;

const Tree = styled.ul`
  flex: 1;
  margin: 0;
  padding: 0;
  overflow: hidden;
  list-style: none;
`;

const TreeItem = styled.li`
  display: flex;
  align-items: center;
  gap: ${({ $root }) => ($root ? 4 : 5)}px;
  height: 22px;
  padding-left: ${({ $root }) => ($root ? 4 : 0)}px;
  white-space: pre;
`;

const Twist = styled.span`
  width: 20px;
  height: 8px;

  &::after {
    content: "";
    display: ${({ $shown }) => ($shown ? 'block' : 'none')};
    width: 0;
    margin-left: 9px;
    border: 4px solid transparent;
    border-left-color: #555;
    border-right-width: 0;
  }
`;

const RollbackBar = styled.li`
  height: 3px;
  background: #3f8fbc;
`;

const ScrollRow = styled.div`
  display: flex;
  align-items: center;
  justify-content: space-between;
  height: 16px;
  margin-bottom: 3px;
  padding: 0 1px 0 2px;
`;

const Thumb = styled.div`
  flex: 1;
  height: 16px;
  margin: 0 11px 0 3px;
  background: #cbcbcb;
`;

const PanelFoot = styled.div`
  height: 3px;
  border-top: 1px solid #c4c4c4;
`;

const SideHandle = styled.div`
  position: absolute;
  top: 425px;
  right: -9px;
  z-index: 1;
  display: flex;
  align-items: center;
  justify-content: center;
  width: 9px;
  height: 39px;
  border: 1px solid #858585;
  border-left: 0;
  background: #f6f6f6;
`;

const TREE = [
  ['folderHistory', 'Folder'],
  ['folderSensor', 'Sensors'],
  ['folderNote', 'Annotations', true],
  ['folderBody', 'Solid Bodies(1)', true],
  ['material', 'Material <not specified>'],
  ['plane', 'Front Plane'],
  ['plane', 'Top Plane'],
  ['plane', 'Right Plane'],
  ['origin', 'Origin'],
  ['extrude', 'Boss-Extrude1', true],
  ['cut', 'Cut-Extrude1', true],
  ['cut', 'Cut-Extrude7', true],
  ['cut', 'Cut-Extrude8', true],
  ['circular', 'CirPattern1'],
];

const FeaturePanel = () => (
  <Panel>
    <Grip><Dot /></Grip>
    <PanelTabs>
      {['part', 'props', 'config', 'target', 'ballDark'].map((name, index) => (
        <PanelTab key={name} $active={index === 0} aria-label={name}><Icon name={name} /></PanelTab>
      ))}
      <PanelMore aria-label="More tabs"><Icon name="chevronRight" size={14} /></PanelMore>
    </PanelTabs>
    <FilterBox>
      <Icon name="filter" size={18} />
      <input type="text" aria-label="Filter tree" />
    </FilterBox>
    <Tree>
      <TreeItem $root><Icon name="part" size={18} />{'Part1  (Default<<Default>_Display State 1>'}</TreeItem>
      {TREE.map(([icon, label, expandable]) => (
        <TreeItem key={label}>
          <Twist $shown={expandable} />
          <Icon name={icon} size={19} />
          {label}
        </TreeItem>
      ))}
      <RollbackBar />
    </Tree>
    <ScrollRow>
      <Icon name="chevronLeft" size={12} />
      <Thumb />
      <Icon name="chevronRight" size={12} />
    </ScrollRow>
    <PanelFoot />
    <SideHandle><Dot /></SideHandle>
  </Panel>
);

/* ---------- gear model ---------- */

const CX = 994.2;
const CY = 583.8;
const SQUASH = 0.902;
const TILT = 77.9;
const AXIS = [0.978, -0.21];
const DEPTH = [93, -20];
const STEP = [18.5, -4];
const TEETH = 30;
const PHASE = 11.6;

// face radius and angle in degrees -> point on the drawing
const project = (radius, degrees) => {
  const t = (degrees * Math.PI) / 180;
  const u = radius * SQUASH * Math.cos(t);
  const w = radius * Math.sin(t);
  return [CX + u * AXIS[0] - w * AXIS[1], CY + u * AXIS[1] + w * AXIS[0]];
};

// one side of a tooth from root to tip: [radius, half angle, draws an edge]
const FLANK = [[195.8, 5.4, false], [196.8, 4.6, true]];
for (let i = 0; i <= 12; i += 1) {
  const rise = i / 12;
  FLANK.push([200 + 39.4 * rise, 4.1 - 2.2 * rise ** 1.7, i === 0 || i === 12]);
}

const buildOutline = () => {
  const points = [];
  for (let n = 0; n < TEETH; n += 1) {
    const mid = PHASE + (n * 360) / TEETH;
    FLANK.forEach(([r, a, edge]) => points.push({ p: project(r, mid - a), edge }));
    [...FLANK].reverse().forEach(([r, a, edge]) => points.push({ p: project(r, mid + a), edge }));
  }
  return points;
};

const shade = (nx, ny) => {
  const lit = (1 + Math.cos(Math.atan2(ny, nx) + 0.96)) / 2;
  const v = Math.round(24 + 50 * lit ** 0.85);
  return `rgb(${v},${v},${v})`;
};

const fmt = (list) => list.map(([x, y]) => `${x.toFixed(1)},${y.toFixed(1)}`).join(' ');
const shift = ([x, y], [dx, dy]) => [x + dx, y + dy];
const back = (point) => shift(point, DEPTH);

const OUTLINE = buildOutline();

// side walls facing the viewer, farthest first
const WALLS = OUTLINE.map((a, index) => {
  const b = OUTLINE[(index + 1) % OUTLINE.length];
  const nx = b.p[1] - a.p[1];
  const ny = a.p[0] - b.p[0];
  const along = ((a.p[0] + b.p[0]) / 2) * AXIS[0] + ((a.p[1] + b.p[1]) / 2) * AXIS[1];
  return { a, b, nx, ny, along, visible: nx * DEPTH[0] + ny * DEPTH[1] > 0 };
})
  .filter((wall) => wall.visible)
  .sort((one, two) => one.along - two.along);

const Disc = ({ radius, offset = [0, 0], ...rest }) => (
  <ellipse
    rx={radius}
    ry={radius * SQUASH}
    transform={`translate(${CX + offset[0]} ${CY + offset[1]}) rotate(${TILT})`}
    {...rest}
  />
);

const BORE = 'M1042.100 535 A73.200 66 77.900 1 1 1018.900 517.300 L1028.600 505 L1049.300 521 Z';
const HUB_WALL = `M${fmt([project(110, -90)])} L${fmt([shift(project(110, -90), STEP)])}
  A110 99.200 77.900 0 1 ${fmt([shift(project(110, 90), STEP)])} L${fmt([project(110, 90)])} Z`;

const GearSvg = styled.svg`
  display: block;
  width: 100%;
  height: 100%;
`;

const GearModel = () => (
  <GearSvg viewBox="253 117 1667 889" role="img" aria-label="Gear model">
    <defs>
      <filter id="soft" x="-10%" y="-10%" width="120%" height="120%">
        <feGaussianBlur stdDeviation="6" />
      </filter>
      <linearGradient id="recess" x1="0" y1="0" x2="0" y2="1">
        <stop offset="0" stopColor="#1b1b1b" />
        <stop offset=".2" stopColor="#222" />
        <stop offset=".5" stopColor="#464646" />
        <stop offset="1" stopColor="#4a4a4a" />
      </linearGradient>
      <linearGradient id="hub" x1="0" y1="0" x2="0" y2="1">
        <stop offset="0" stopColor="#484848" />
        <stop offset=".45" stopColor="#4a4a4a" />
        <stop offset=".72" stopColor="#343434" />
        <stop offset="1" stopColor="#161616" />
      </linearGradient>
      <linearGradient id="bore" x1="0" y1="0" x2="0" y2="1">
        <stop offset="0" stopColor="#1f1f1f" />
        <stop offset=".55" stopColor="#3e3e3e" />
        <stop offset=".85" stopColor="#4a4a4a" />
        <stop offset="1" stopColor="#424242" />
      </linearGradient>
      <clipPath id="recessClip"><Disc radius={183.6} /></clipPath>
      <clipPath id="boreClip"><path d={BORE} /></clipPath>
    </defs>

    <polygon points="694,629 790,613 1147,897 1053,913" fill="#6c6c6c" filter="url(#soft)" />

    <g strokeLinejoin="round">
      {WALLS.map(({ a, b, nx, ny }, index) => {
        const fill = shade(nx, ny);
        return (
          <g key={index}>
            <polygon points={fmt([a.p, b.p, back(b.p), back(a.p)])} fill={fill} stroke={fill} strokeWidth="1" />
            <polyline points={fmt([back(a.p), back(b.p)])} stroke="#000" />
            {a.edge && <polyline points={fmt([a.p, back(a.p)])} stroke="#000" />}
            {b.edge && <polyline points={fmt([b.p, back(b.p)])} stroke="#000" />}
          </g>
        );
      })}
      <polygon points={fmt(OUTLINE.map(({ p }) => p))} fill="#303030" stroke="#000" strokeWidth="1.200" />
    </g>

    <g clipPath="url(#recessClip)" stroke="#000" strokeWidth="1.200">
      <Disc radius={183.6} fill="url(#recess)" />
      <Disc radius={183.6} offset={STEP} fill="#303030" />
    </g>
    <g fill="none" stroke="#000" strokeWidth="1.200">
      <Disc radius={183.6} />
      <path d={HUB_WALL} fill="url(#hub)" stroke="none" />
      <Disc radius={110} offset={STEP} />
      <Disc radius={110} fill="#303030" />
    </g>

    <path d={BORE} fill="url(#bore)" />
    <g clipPath="url(#boreClip)" stroke="#000" strokeWidth="1.200">
      <path d="M1018.900 517.300L1028.600 505l60-13v12z" fill="#262626" />
      <Disc radius={73.2} offset={DEPTH} fill="#fff" />
    </g>
    <path d={BORE} fill="none" stroke="#000" strokeWidth="1.200" />

    <g stroke="#8e8e8e">
      <path d="M980 540L1059 583.500" />
      <path d="M1235 682L1269 700L1479 815.500" />
      <path d="M1242 684l11 3-2 4z" fill="#8e8e8e" />
    </g>
    <text
      transform="translate(1427 784) rotate(29)"
      fill="#8a8a8a" fontFamily="Lato, sans-serif" fontWeight="300" fontSize="18"
    >
      Ø65,00
    </text>

    <g stroke="#0a0ae0" fill="#0a0ae0">
      <path d="M1040.500 573.500L1052 555M1040.500 573.500l8 6" fill="none" />
      <path d="M1037 573.500h7M1040.500 570v7M1038 571l5 5M1043 571l-5 5" />
      <path d="M1056 549l-5 4 4 4zM1051 582l-6-2 3-4z" />
    </g>

    <g strokeWidth="3">
      <path d="M294 948L304 930" stroke="#3ee04a" />
      <path d="M307 924l-7 7 7 3z" fill="#12a51c" />
      <path d="M294 948L309 961" stroke="#990808" strokeWidth="4" />
      <path d="M316 966l-10-3 5-6z" fill="#990808" />
      <path d="M294 948L284 950" stroke="#1414a0" />
      <circle cx="284" cy="950" r="4" fill="#0c0c96" />
    </g>
    <g fontFamily="Liberation Sans, sans-serif" fontSize="9">
      <text x="308" y="919" fill="#46e052">Y</text>
      <text x="317" y="969" fill="#e04646">X</text>
      <text x="275" y="951" fill="#3636c8">Z</text>
    </g>
  </GearSvg>
);

/* ---------- viewport ---------- */

const Viewport = styled.section`
  position: relative;
  flex: 1;
  min-width: 0;
  background: #fff;
`;

const HeadsUp = styled.div`
  position: absolute;
  top: 0;
  left: 0;
  right: 0;
  display: grid;
  grid-template-columns: 1fr auto 1fr;
  align-items: center;
  height: 30px;
`;

const ViewTools = styled.div`
  grid-column: 2;
  display: flex;
  margin-right: 5px;
`;

const DocControls = styled.div`
  display: flex;
  justify-content: flex-end;
  padding-right: 7px;
`;

const TaskPane = styled.div`
  position: absolute;
  top: 51px;
  right: 0;
  width: 26px;
  border: 1px solid #858585;
  border-right: 0;
`;

const TaskTab = styled.button`
  display: flex;
  align-items: center;
  justify-content: center;
  width: 100%;
  height: 24px;
  padding: 0;
  border: 0;
  border-bottom: 1px solid #858585;
  background: ${({ $active }) => ($active ? '#fff' : '#d4d4d4')};

  &:first-child,
  &:last-child {
    height: 23px;
  }
  &:last-child {
    border-bottom: 0;
  }
`;

const VIEW_TOOLS = [
  ['zoomFit'], ['zoomArea'], ['prevView'], ['section'], ['viewCube', true], ['display', true],
  ['eye', true], ['appearance'], ['scene', true], ['monitor', true],
];

const TASKS = ['home', 'library', 'folderOpen', 'palette', 'ball', 'props', 'forum'];

const ModelView = () => (
  <Viewport>
    <GearModel />
    <HeadsUp>
      <ViewTools>
        {VIEW_TOOLS.map(([name, menu]) => (
          <React.Fragment key={name}>
            <ToolButton $width={26} aria-label={name}><Icon name={name} size={19} /></ToolButton>
            {menu && <ToolButton $width={14} aria-label={`${name} options`}><Caret $muted /></ToolButton>}
          </React.Fragment>
        ))}
      </ViewTools>
      <DocControls>
        {['paneLeft', 'paneRight', 'minimize', 'restore', 'close'].map((name) => (
          <ToolButton key={name} $width={26} $muted aria-label={name}><Icon name={name} /></ToolButton>
        ))}
      </DocControls>
    </HeadsUp>
    <TaskPane>
      {TASKS.map((name) => (
        <TaskTab key={name} $active={name === 'ball'} aria-label={name}><Icon name={name} size={19} /></TaskTab>
      ))}
    </TaskPane>
  </Viewport>
);

/* ---------- footer ---------- */

const SheetBar = styled.div`
  display: flex;
  flex: none;
  height: 16px;
  padding-left: 2px;
  border-top: 1px solid #858585;
  border-bottom: 1px solid #858585;
`;

const NavButton = styled.button`
  display: flex;
  align-items: center;
  justify-content: center;
  width: 16px;
  padding: 0;
  border: 0;
  border-right: 1px solid #858585;
  background: #ababab;
`;

const SheetTab = styled.button`
  width: ${({ $width }) => $width}px;
  padding: 0 8px 2px 10px;
  border: 0;
  border-right: 1px solid #858585;
  background: ${({ $active }) => ($active ? '#fff' : '#d4d4d4')};
  line-height: 12px;
  font-weight: ${({ $active }) => ($active ? 700 : 400)};
  text-align: left;
`;

const StatusBar = styled.footer`
  display: flex;
  align-items: center;
  flex: none;
  height: 18px;
  padding: 0 2px 0 1px;
`;

const StatusItem = styled.span`
  width: ${({ $width }) => $width}px;
`;

const StatusSpacer = styled.span`
  flex: 1;
`;

const UpCaret = styled(Caret)`
  margin-right: 26px;
  transform: rotate(180deg);
`;

const Taskbar = styled.div`
  flex: none;
  height: 4px;
  padding-left: 48px;
  background: #1d2120;
`;

const TaskbarSearch = styled.div`
  width: 344px;
  height: 4px;
  border-top: 1px solid #aaa;
  background: #f2f2f2;
`;

const App = () => (
  <>
    <GlobalStyle />
    <Window>
      <TopBar />
      <Ribbon />
      <CommandTabs>
        {TABS.map(([label, width], index) => (
          <CommandTab key={label} $width={width} $active={index === 0}>{label}</CommandTab>
        ))}
      </CommandTabs>
      <Workspace>
        <FeaturePanel />
        <ModelView />
      </Workspace>
      <SheetBar>
        {['navFirst', 'navPrev', 'navNext', 'navLast'].map((name) => (
          <NavButton key={name} aria-label={name}><Icon name={name} size={12} /></NavButton>
        ))}
        <SheetTab $width={58} $active>Model</SheetTab>
        <SheetTab $width={108}>Motion Study 1</SheetTab>
      </SheetBar>
      <StatusBar>
        SOLIDWORKS Premium 2021 SP2.0
        <StatusSpacer />
        <StatusItem $width={185}>Editing Part</StatusItem>
        <StatusItem $width={60}>MMGS</StatusItem>
        <UpCaret />
        <Icon name="tag" size={18} />
      </StatusBar>
      <Taskbar><TaskbarSearch /></Taskbar>
    </Window>
  </>
);

export default App;
